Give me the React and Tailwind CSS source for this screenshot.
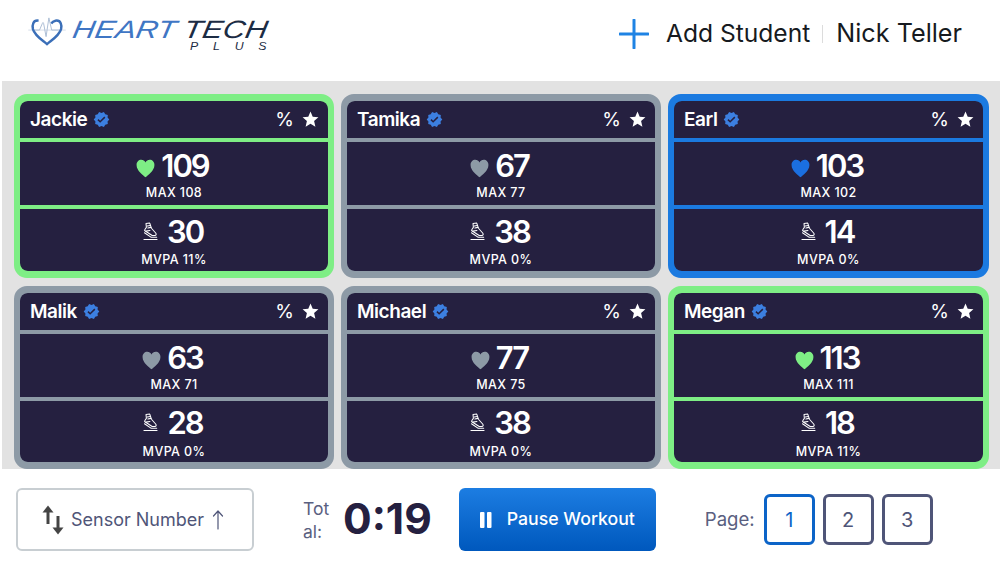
import React from "react";
import { MdVerified, MdStar } from "react-icons/md";

const students = [
  { name: "Jackie", hr: 109, max: 108, pts: 30, mvpa: 11, c: "green" },
  { name: "Tamika", hr: 67, max: 77, pts: 38, mvpa: 0, c: "gray" },
  { name: "Earl", hr: 103, max: 102, pts: 14, mvpa: 0, c: "blue" },
  { name: "Malik", hr: 63, max: 71, pts: 28, mvpa: 0, c: "gray" },
  { name: "Michael", hr: 77, max: 75, pts: 38, mvpa: 0, c: "gray" },
  { name: "Megan", hr: 113, max: 111, pts: 18, mvpa: 11, c: "green" },
];
const tone = {
  green: { border: "border-[#7eee85]", bg: "bg-[#7eee85]", text: "text-[#7eee85]" },
  gray: { border: "border-[#8d9aa6]", bg: "bg-[#8d9aa6]", text: "text-[#8d9aa6]" },
  blue: { border: "border-[#1b7ae0]", bg: "bg-[#1b7ae0]", text: "text-[#1b6fe0]" },
};

function Heart({ className }) {
  return (
    <svg viewBox="0 0 20 20" className={className} fill="currentColor">
      <path d="M10 19.8C7.4 17.6 0.6 13 0.6 6.8 0.6 3.5 2.9 1.4 5.5 1.4 7.5 1.4 9.1 2.5 10 4.2 10.9 2.5 12.5 1.4 14.5 1.4c2.6 0 4.9 2.1 4.9 5.4 0 6.2-6.8 10.8-9.4 13z" />
    </svg>
  );
}

function Shoe() {
  return (
    <svg viewBox="0 0 16 20" className="w-[15px] h-[19px] text-white" fill="none" stroke="currentColor" strokeWidth="1.1" strokeLinejoin="round" strokeLinecap="round">
      <path d="M3.2 1.5 L7.2 1 L9 6.5 L13.5 11.6 C14.5 12.8 14.2 14.3 12.6 14.3 L9.8 14.3 L2 9.2 C1.6 8.9 1.6 8.4 2 7.9 L3.6 5.6 Z" />
      <path d="M4.5 4.2 L7.8 3.6 M5.2 6.3 L8.4 5.6 M3 9.6 L7.4 9 M1.6 11.3 L8.8 16.2 L14.6 16.2 M1 18.6 L15 18.6" />
    </svg>
  );
}

function Card({ s }) {
  const t = tone[s.c];
  return (
    <div className={`${t.border} ${t.bg} border-x-[6px] border-y-[7px] rounded-[13px] overflow-hidden flex flex-col gap-[4px]`}>
      <div className="h-[37px] shrink-0 bg-[#252040] rounded-t-[8px] flex items-center pl-[10px] pr-[8px] text-white">
        <span className="text-[19px] leading-none font-semibold tracking-[-0.45px]">{s.name}</span>
        <MdVerified className="ml-[6px] text-[#3c7fe0] w-[17px] h-[17px]" />
        <span className="ml-auto text-[19px] leading-none tracking-[-1px]">%</span>
        <MdStar className="ml-[8px] w-[19px] h-[19px]" />
      </div>
      <div className="flex-1 bg-[#252040] flex flex-col items-center pt-[5px] text-white">
        <div className="flex items-center h-[36px] pr-[3px]">
          <Heart className={`${t.text} w-[19px] h-[20px] mr-[6px] mt-[5px]`} />
          <span className="text-[31px] leading-none font-semibold tracking-[-2px]">{s.hr}</span>
        </div>
        <span className="text-[12.5px] leading-none font-medium mt-[4px] tracking-[0.4px]">MAX {s.max}</span>
      </div>
      <div className="flex-1 bg-[#252040] rounded-b-[8px] flex flex-col items-center pt-[4px] text-white">
        <div className="flex items-center h-[36px] pr-[2px]">
          <Shoe />
          <span className="text-[31px] leading-none font-semibold ml-[9px] tracking-[-2px]">{s.pts}</span>
        </div>
        <span className="text-[12.5px] leading-none font-medium mt-[5px] tracking-[0.4px]">MVPA {s.mvpa}%</span>
      </div>
    </div>
  );
}

function Logo() {
  return (
    <div className="flex items-start">
      <svg viewBox="0 0 40 32" className="w-[38px] h-[30px] -ml-[3px]" fill="none">
        <path d="M0 15 H40" stroke="#c9d4e4" strokeWidth="0.8" />
        <path d="M11 5 C5 4 4 10 5 14 C7 21 14 25 20 30 C26 25 33 21 35 14 C36 10 35 4 29 5 C27 5.4 25.6 6.4 24.5 8" stroke="#3b6fb8" strokeWidth="2.6" />
        <path d="M7 15 L12 15 L15 8 C15.6 6.4 16 6.5 16.4 8 L19 22 L22 2 L25 15 L33 15" stroke="#a9bbd3" strokeWidth="1" />
      </svg>
      <div className="ml-[7px] flex flex-col items-start mt-[1px] scale-x-[1.23] origin-left font-['Liberation_Sans',sans-serif] italic">
        <div className="flex h-[24px] items-center text-[25px] leading-none whitespace-nowrap -skew-x-[8deg]">
          <span className="text-[#3f76c4]">HEART</span>
          <span className="text-[#1c2c44] ml-[6px]">TECH</span>
        </div>
        <div className="text-[10px] leading-none text-[#1c2c44] tracking-[12px] self-end mr-[-11px] mt-[1px]">PLUS</div>
      </div>
    </div>
  );
}

export default function App() {
  return (
    <div className="w-[1000px] h-[563px] bg-white overflow-hidden flex flex-col font-['Inter',sans-serif]">
      <header className="h-[81px] shrink-0 flex items-center pl-[31px] pr-[38px] pb-[14px]">
        <Logo />
        <div className="ml-auto flex items-center text-[#161a20]">
          <svg viewBox="0 0 30 30" className="w-[30px] h-[30px]" stroke="#1f83e4" strokeWidth="3" strokeLinecap="round">
            <path d="M15 1 V29 M1 15 H29" />
          </svg>
          <span className="ml-[17px] text-[24.6px] leading-none">Add Student</span>
          <span className="ml-[12px] w-px h-[18px] bg-[#dcdcdc]" />
          <span className="ml-[13px] text-[25.2px] leading-none">Nick Teller</span>
        </div>
      </header>
      <main className="ml-[2px] h-[388px] shrink-0 bg-[#e2e2e2] pt-[13px] pl-[12px] pr-[11px] grid grid-cols-[320px_320px_321px] grid-rows-[184px_183px] gap-x-[7px] gap-y-[8px]">
        {students.map((s) => (
          <Card key={s.name} s={s} />
        ))}
      </main>
      <footer className="flex-1 flex items-center pl-[16px] pt-[7px]">
        <button className="w-[238px] h-[63px] border-2 border-[#c8ced2] rounded-[6px] flex items-center pl-[24px] text-[#4f5578] text-[18px]">
          <svg viewBox="0 0 22 30" className="w-[22px] h-[30px]" fill="#444" stroke="#444" strokeWidth="3">
            <path d="M6 7 V19" fill="none" />
            <path d="M6 0.5 L0.5 7.5 H11.5 Z" stroke="none" />
            <path d="M16 11 V23" fill="none" />
            <path d="M16 29.5 L10.5 22.5 H21.5 Z" stroke="none" />
          </svg>
          <span className="ml-[7px]">Sensor Number</span>
          <svg viewBox="0 0 14 22" className="w-[14px] h-[22px] ml-[7px]" fill="none" stroke="#4f5578" strokeWidth="1.2" strokeLinecap="round" strokeLinejoin="round">
            <path d="M7 20 V2 M2.5 7 L7 2 L11.5 7" />
          </svg>
        </button>
        <div className="ml-[49px] w-[30px] text-[17.5px] leading-[23px] text-[#5a6080] break-all">Total:</div>
        <div className="ml-[10px] text-[42.5px] leading-none font-bold text-[#252040]">0:19</div>
        <button className="ml-[27px] w-[197px] h-[63px] rounded-[6px] bg-gradient-to-b from-[#1c7de2] to-[#0058bd] flex items-center pl-[21px] text-white text-[17.7px] font-medium">
          <svg viewBox="0 0 12 16" className="w-[12px] h-[16px]" fill="white">
            <rect x="0" y="0" width="4.5" height="16" rx="1" />
            <rect x="7" y="0" width="4.5" height="16" rx="1" />
          </svg>
          <span className="ml-[15px]">Pause Workout</span>
        </button>
        <span className="ml-[49px] text-[18.6px] text-[#5a6080]">Page:</span>
        <div className="ml-[9px] flex gap-[8px] text-[20px]">
          <div className="w-[51px] h-[51px] border-[3px] border-[#0c64c8] text-[#0c64c8] rounded-[6px] flex items-center justify-center">1</div>
          <div className="w-[51px] h-[51px] border-[3px] border-[#4f5578] text-[#4f5578] rounded-[6px] flex items-center justify-center">2</div>
          <div className="w-[51px] h-[51px] border-[3px] border-[#4f5578] text-[#4f5578] rounded-[6px] flex items-center justify-center">3</div>
        </div>
      </footer>
    </div>
  );
}
